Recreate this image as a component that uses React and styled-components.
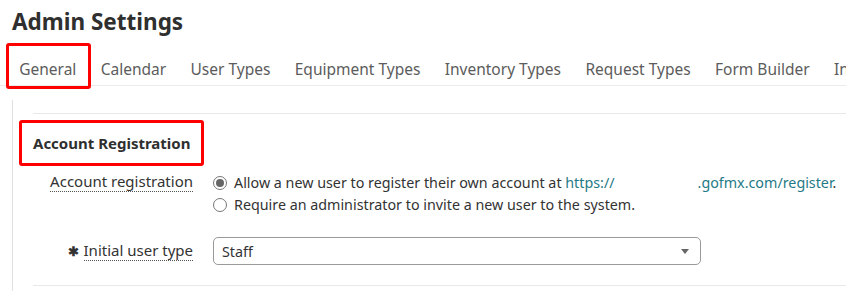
import styled, { createGlobalStyle } from "styled-components";

const Global = createGlobalStyle`
  html, body {
    margin: 0;
    padding: 0;
    background: #fff;
    font-family: "Noto Sans", "Open Sans", sans-serif;
    color: #333;
    overflow: hidden;
  }
`;

const Page = styled.div`
  width: 846px;
  height: 291px;
  overflow: hidden;
  box-sizing: border-box;
`;

const Title = styled.h1`
  margin: 0;
  padding: 7px 0 0 12px;
  font-size: 22.5px;
  line-height: 30px;
  font-weight: 700;
  color: #2f2f2f;
`;

const Tabs = styled.div`
  display: flex;
  margin-top: 6px;
  padding-left: 7px;
  border-bottom: 1px solid #ebebeb;
  white-space: nowrap;
`;

const Tab = styled.div`
  position: relative;
  box-sizing: border-box;
  height: 42px;
  padding: 9px 12.2px 0;
  display: flex;
  align-items: center;
  font-size: 15.5px;
  color: #5c5c5c;
  flex-shrink: 0;

  /* highlight box drawn over the active tab */
  &::before {
    content: "";
    display: ${(p) => (p.$active ? "block" : "none")};
    position: absolute;
    top: 0;
    bottom: -4px;
    left: -1px;
    right: -2px;
    border: 3px solid #ff0000;
    border-radius: 3px;
  }
`;

const Body = styled.div`
  margin: 14px 0 0 12px;
  border-left: 1px solid #e0e0e0;
  padding: 13px 0 0 20px;
  height: 200px;
`;

const Section = styled.section`
  border-top: 1px solid #e8e8e8;
  padding-top: 6px;
`;

const SectionHead = styled.h2`
  display: inline-flex;
  align-items: center;
  box-sizing: border-box;
  margin: 0 0 0 -14px;
  height: 46px;
  padding: 0 11px;
  font-size: 15px;
  font-weight: 700;
  color: #2f2f2f;
  border: 3px solid #ff0000;
  border-radius: 3px;
`;

const Row = styled.div`
  display: grid;
  grid-template-columns: 160px 1fr;
  column-gap: 20px;
  align-items: ${(p) => p.$align || "start"};
  margin-top: ${(p) => p.$top || 0}px;
`;

const Label = styled.div`
  justify-self: end;
  font-size: 15px;
  line-height: 22px;
  color: #333;
  display: flex;
  align-items: center;
  gap: 5px;
`;

const Dotted = styled.span`
  border-bottom: 1px dotted #555;
  line-height: 19px;
`;

const Star = styled.span`
  font-size: 13px;
  font-weight: 700;
  color: #333;
`;

const Options = styled.div`
  display: flex;
  flex-direction: column;
`;

const Option = styled.label`
  display: flex;
  align-items: center;
  gap: 7px;
  font-size: 14.3px;
  line-height: 22px;
  color: #333;
  white-space: nowrap;
`;

const Radio = styled.span`
  box-sizing: border-box;
  width: 14px;
  height: 14px;
  border-radius: 50%;
  border: 1px solid #777;
  display: inline-flex;
  align-items: center;
  justify-content: center;
  &::after {
    content: "";
    width: 8px;
    height: 8px;
    border-radius: 50%;
    background: ${(p) => (p.$checked ? "#666" : "transparent")};
  }
`;

const Link = styled.span`
  color: #1f7a86;
`;

const Gap = styled.span`
  display: inline-block;
  width: ${(p) => p.$w}px;
`;

const Select = styled.div`
  box-sizing: border-box;
  width: 488px;
  height: 28px;
  border: 1px solid #999;
  border-radius: 5px;
  display: flex;
  align-items: center;
  justify-content: space-between;
  padding: 0 11px 0 8px;
  font-size: 14.3px;
  color: #333;
`;

const Caret = styled.span`
  width: 0;
  height: 0;
  border-left: 4px solid transparent;
  border-right: 4px solid transparent;
  border-top: 5px solid #666;
`;

const Divider = styled.div`
  border-top: 1px solid #e8e8e8;
  margin-top: 20px;
`;

const tabs = [
  "General",
  "Calendar",
  "User Types",
  "Equipment Types",
  "Inventory Types",
  "Request Types",
  "Form Builder",
  "Inspections",
];

export default function App() {
  return (
    <Page>
      <Global />
      <Title>Admin Settings</Title>
      <Tabs>
        {tabs.map((t, i) => (
          <Tab key={t} $active={i === 0}>
            {t}
          </Tab>
        ))}
      </Tabs>
      <Body>
        <Section>
          <SectionHead>Account Registration</SectionHead>
          <Row $top={6}>
            <Label>
              <Dotted>Account registration</Dotted>
            </Label>
            <Options>
              <Option>
                <Radio $checked />
                <span>
                  Allow a new user to register their own account at{" "}
                  <Link>
                    https://
                    <Gap $w={83} />
                    .gofmx.com/register
                  </Link>
                  .
                </span>
              </Option>
              <Option>
                <Radio />
                <span>Require an administrator to invite a new user to the system.</span>
              </Option>
            </Options>
          </Row>
          <Row $top={21} $align="center">
            <Label>
              <Star>✱</Star>
              <Dotted>Initial user type</Dotted>
            </Label>
            <Select>
              <span>Staff</span>
              <Caret />
            </Select>
          </Row>
          <Divider />
        </Section>
      </Body>
    </Page>
  );
}
